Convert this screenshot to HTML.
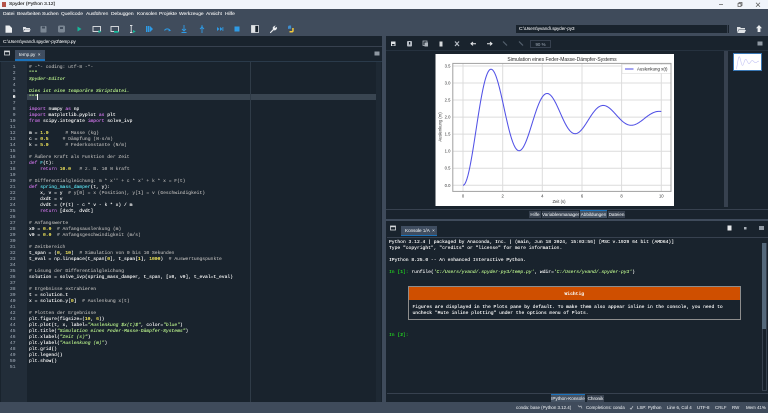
<!DOCTYPE html>
<html lang="de"><head><meta charset="utf-8"><title>Spyder (Python 3.12)</title>
<style>
html,body{margin:0;padding:0;width:768px;height:413px;overflow:hidden;background:#3f4b5b}
body{position:relative;font-family:"Liberation Sans",sans-serif;color:#e0e1e3;filter:blur(.3px);text-shadow:0 0 .2px currentColor}
.a{position:absolute}
.t{position:absolute;white-space:nowrap;font-size:4.9px;line-height:6px}
pre{margin:0;position:absolute;font-family:"Liberation Mono",monospace;font-size:4.67px;line-height:6px;color:#f0f0f0;white-space:pre}
.c{color:#a8a8a8}.k{color:#c670e0}.s{color:#b0e686;font-style:italic}.s2{color:#b0e686}.n{color:#faed5c}.d{color:#57d6e4}.b{color:#fab16c}
.tab{position:absolute;background:#455364;font-size:4.6px;line-height:8px;text-align:center;color:#d0d4d8;white-space:nowrap}
svg{position:absolute;left:0;top:0}
</style></head><body>
<!-- title bar -->
<div class="a" style="left:0;top:0;width:768px;height:9px;background:#f0f4fb"></div>
<div class="a" style="left:2px;top:2px;width:4px;height:5px;background:#b5534a"></div>
<div class="t" style="left:9px;top:2px;color:#333;font-size:4.9px">Spyder (Python 3.12)</div>
<!-- menu -->
<div class="a" style="left:0;top:9px;width:768px;height:11px;background:#3f4b5b"></div>
<div class="a" style="left:0;top:20px;width:768px;height:16px;background:#404c5c"></div>
<div class="t" style="left:3px;top:12px">Datei</div>
<div class="t" style="left:17px;top:12px">Bearbeiten</div>
<div class="t" style="left:42px;top:12px">Suchen</div>
<div class="t" style="left:61px;top:12px">Quellcode</div>
<div class="t" style="left:86px;top:12px">Ausführen</div>
<div class="t" style="left:111px;top:12px">Debuggen</div>
<div class="t" style="left:137px;top:12px">Konsolen</div>
<div class="t" style="left:159px;top:12px">Projekte</div>
<div class="t" style="left:179px;top:12px">Werkzeuge</div>
<div class="t" style="left:206px;top:12px">Ansicht</div>
<div class="t" style="left:225px;top:12px">Hilfe</div>

<!-- left pane -->
<div class="a" style="left:0;top:36px;width:382px;height:366px;background:#19232d"></div>
<div class="a" style="left:0;top:46px;width:382px;height:1px;background:#37414f"></div>
<div class="t" style="left:3px;top:39px;font-size:4.5px;color:#d8dadd">C:\Users\yvand\.spyder-py3\temp.py</div>
<div class="tab" style="left:15px;top:50px;width:30px;height:9px;line-height:9px;text-align:left;text-indent:4px;background:#3f4d60">temp.py &nbsp;×</div>
<div class="a" style="left:15px;top:59px;width:30px;height:2px;background:#1a72bb"></div>
<div class="a" style="left:0;top:61px;width:382px;height:1px;background:#2a3a4a"></div>
<div class="a" style="left:1px;top:62px;width:26px;height:340px;background:#222d39"></div>
<div class="a" style="left:27px;top:94px;width:349px;height:6px;background:#394551"></div>
<div class="a" style="left:250px;top:62px;width:1px;height:340px;background:#2f3b47"></div>
<div class="a" style="left:376px;top:62px;width:5px;height:340px;background:#1e2934"></div>
<div class="a" style="left:37px;top:94px;width:.7px;height:6px;background:#fff"></div>
<pre style="left:0;top:65px;width:15.5px;text-align:right;color:#8a94a0">1
2
3
4
5
<span style="color:#fff;font-weight:bold">6</span>
7
8
9
10
11
12
13
14
15
16
17
18
19
20
21
22
23
24
25
26
27
28
29
30
31
32
33
34
35
36
37
38
39
40
41
42
43
44
45
46
47
48
49
50
51</pre>
<pre style="left:29px;top:65px"><span class="c"># -*- coding: utf-8 -*-</span>
<span class="s2">"""</span>
<span class="s">Spyder-Editor</span>

<span class="s">Dies ist eine temporäre Skriptdatei.</span>
<span class="s2">"""</span>

<span class="k">import</span> numpy <span class="k">as</span> np
<span class="k">import</span> matplotlib.pyplot <span class="k">as</span> plt
<span class="k">from</span> scipy.integrate <span class="k">import</span> solve_ivp

m = <span class="n">1.0</span>      <span class="c"># Masse (kg)</span>
c = <span class="n">0.5</span>     <span class="c"># Dämpfung (N·s/m)</span>
k = <span class="n">5.0</span>      <span class="c"># Federkonstante (N/m)</span>

<span class="c"># Äußere Kraft als Funktion der Zeit</span>
<span class="k">def</span> <span class="d">F</span>(t):
    <span class="k">return</span> <span class="n">10.0</span>   <span class="c"># z. B. 10 N kraft</span>

<span class="c"># Differentialgleichung: m * x'' + c * x' + k * x = F(t)</span>
<span class="k">def</span> <span class="d">spring_mass_damper</span>(t, y):
    x, v = y  <span class="c"># y[0] = x (Position), y[1] = v (Geschwindigkeit)</span>
    dxdt = v
    dvdt = (F(t) - c * v - k * x) / m
    <span class="k">return</span> [dxdt, dvdt]

<span class="c"># Anfangswerte</span>
x0 = <span class="n">0.0</span>  <span class="c"># Anfangsauslenkung (m)</span>
v0 = <span class="n">0.0</span>  <span class="c"># Anfangsgeschwindigkeit (m/s)</span>

<span class="c"># Zeitbereich</span>
t_span = (<span class="n">0</span>, <span class="n">10</span>)  <span class="c"># Simulation von 0 bis 10 Sekunden</span>
t_eval = np.linspace(t_span[<span class="n">0</span>], t_span[<span class="n">1</span>], <span class="n">1000</span>)  <span class="c"># Auswertungspunkte</span>

<span class="c"># Lösung der Differentialgleichung</span>
solution = solve_ivp(spring_mass_damper, t_span, [x0, v0], t_eval=t_eval)

<span class="c"># Ergebnisse extrahieren</span>
t = solution.t
x = solution.y[<span class="n">0</span>]  <span class="c"># Auslenkung x(t)</span>

<span class="c"># Plotten der Ergebnisse</span>
plt.figure(figsize=(<span class="n">10</span>, <span class="n">6</span>))
plt.plot(t, x, label=<span class="s">"Auslenkung $x(t)$"</span>, color=<span class="s">"blue"</span>)
plt.title(<span class="s">"Simulation eines Feder-Masse-Dämpfer-Systems"</span>)
plt.xlabel(<span class="s">"Zeit (s)"</span>)
plt.ylabel(<span class="s">"Auslenkung (m)"</span>)
plt.grid()
plt.legend()
plt.show()
</pre>

<!-- top right path -->
<div class="a" style="left:516px;top:25px;width:213px;height:8px;background:#19232d"></div>
<div class="t" style="left:519px;top:26px;font-size:4.5px;color:#d8dadd">C:\Users\yvand\.spyder-py3</div>

<!-- plots pane -->
<div class="a" style="left:386px;top:36px;width:382px;height:183px;background:#19232d"></div>
<div class="a" style="left:386px;top:50px;width:382px;height:1px;background:#26323f"></div>
<div class="a" style="left:530px;top:40px;width:21px;height:8px;border:.6px solid #37414f;box-sizing:border-box;font-size:4.4px;line-height:7px;text-align:center;color:#7f8a96">90 %</div>
<div class="a" style="left:724px;top:51px;width:4px;height:156px;background:#37414f"></div>
<div class="a" style="left:733px;top:53px;width:29px;height:18px;background:#fff;border:.8px solid #3a78b5;box-sizing:border-box"></div>
<div class="a" style="left:386px;top:209px;width:382px;height:.6px;background:#37414f"></div>
<div class="tab" style="left:529px;top:211px;width:12px;height:7px;line-height:7px;background:#37414f">Hilfe</div>
<div class="tab" style="left:542px;top:211px;width:37px;height:7px;line-height:7px;background:#37414f">Variablenmanager</div>
<div class="tab" style="left:580px;top:211px;width:27px;height:7px;line-height:7px;background:#455364">Abbildungen</div>
<div class="a" style="left:580px;top:210px;width:27px;height:1px;background:#1a72bb"></div>
<div class="tab" style="left:608px;top:211px;width:17px;height:7px;line-height:7px;background:#37414f">Dateien</div>

<!-- console pane -->
<div class="a" style="left:386px;top:221px;width:382px;height:181px;background:#19232d"></div>
<div class="tab" style="left:401px;top:226px;width:36px;height:9px;line-height:9px;background:#3f4d60;text-align:left;text-indent:4px">Konsole 1/A &nbsp;×</div>
<div class="a" style="left:401px;top:235px;width:36px;height:1.4px;background:#1a72bb"></div>
<div class="a" style="left:387px;top:236.5px;width:381px;height:.7px;background:#37414f"></div>
<div class="a" style="left:387px;top:393px;width:381px;height:.7px;background:#37414f"></div>
<div class="a" style="left:762px;top:243px;width:3px;height:146px;background:#17202a;border:.5px solid #37414f"></div>
<div class="a" style="left:762px;top:243px;width:4px;height:86px;background:#54687a"></div>
<pre style="left:389px;top:240.3px;color:#f0f0f0">Python 3.12.4 | packaged by Anaconda, Inc. | (main, Jun 18 2024, 15:03:56) [MSC v.1929 64 bit (AMD64)]
Type "copyright", "credits" or "license" for more information.

IPython 8.25.0 -- An enhanced Interactive Python.

<span style="color:#22c422">In [<b>1</b>]:</span> runfile(<span class="s">'C:/Users/yvand/.spyder-py3/temp.py'</span>, wdir=<span class="s">'C:/Users/yvand/.spyder-py3'</span>)</pre>
<div class="a" style="left:408px;top:286px;width:333px;height:34px;border:.8px solid #8d8d8d;box-sizing:border-box;background:#19232d"></div>
<div class="a" style="left:409px;top:287px;width:331px;height:12.5px;background:#cf4f00"></div>
<pre style="left:564.5px;top:291.7px;font-weight:bold;color:#f4e6da">Wichtig</pre>
<pre style="left:412.5px;top:305px;line-height:6.2px;color:#f4f4f4">Figures are displayed in the Plots pane by default. To make them also appear inline in the console, you need to
uncheck "Mute inline plotting" under the options menu of Plots.</pre>
<pre style="left:389px;top:333.3px;color:#22c422">In [<b>2</b>]:</pre>
<div class="tab" style="left:551px;top:395px;width:34px;height:7px;line-height:7px;background:#455364">IPython-Konsole</div>
<div class="a" style="left:551px;top:394px;width:34px;height:1px;background:#1a72bb"></div>
<div class="tab" style="left:587px;top:395px;width:17px;height:7px;line-height:7px;background:#37414f">Chronik</div>

<!-- status -->
<div class="t" style="left:516px;top:404.5px;font-size:4.4px;color:#c9ced4">conda: base (Python 3.12.4)</div>
<div class="t" style="left:586px;top:404.5px;font-size:4.4px;color:#c9ced4">Completions: conda</div>
<div class="t" style="left:637px;top:404.5px;font-size:4.4px;color:#c9ced4">LSP: Python</div>
<div class="t" style="left:667px;top:404.5px;font-size:4.4px;color:#c9ced4">Line 6, Col 4</div>
<div class="t" style="left:697px;top:404.5px;font-size:4.4px;color:#c9ced4">UTF-8</div>
<div class="t" style="left:715px;top:404.5px;font-size:4.4px;color:#c9ced4">CRLF</div>
<div class="t" style="left:732px;top:404.5px;font-size:4.4px;color:#c9ced4">RW</div>
<div class="t" style="left:746px;top:404.5px;font-size:4.4px;color:#c9ced4">Mem 41%</div>

<!-- icons -->
<svg width="768" height="413" viewBox="0 0 768 413">
<!-- window buttons -->
<g stroke="#555" stroke-width=".7" fill="none">
<path d="M719 4.5h4"/><rect x="738" y="3.5" width="3" height="3"/><path d="M739 3.5v-1h3v3h-1"/><path d="M756 2.8l4 4m0-4l-4 4"/>
</g>
<!-- main toolbar -->
<path d="M5.5 25.5h4l2.5 2.5v4.8h-6.500z" fill="#eef0f2"/>
<path d="M23 32v-5h2.500l1 1h3.500v1h-6l-1 3zM23.500 32l1.200-2.800h6l-1.200 2.800z" fill="#dfe2e6"/>
<rect x="40.500" y="26" width="6" height="6.500" rx=".8" fill="#7b8794"/><rect x="42" y="26.500" width="3" height="2" fill="#404c5c"/>
<rect x="58" y="25.500" width="7" height="7" rx="1.500" fill="#7b8794"/><rect x="60" y="27" width="3" height="2" fill="#404c5c"/>
<path d="M77.500 26.500l4 2.500-4 2.500z" fill="#16b89a"/>
<g fill="none" stroke="#e0e3e6" stroke-width=".9"><rect x="93" y="26.500" width="7.500" height="5"/><rect x="111" y="26.500" width="7.500" height="5"/><path d="M130 25.500h2.400M130 32.500h2.400M131.200 25.500v7"/></g>
<path d="M98.500 30l2.800 1.600-2.800 1.600zM114 31h4.500v1.800h-4.500zM133 30l2.800 1.500-2.800 1.500z" fill="#16b89a"/>
<path d="M146 26h1.500v6H146zM148 26h1.500v6H148zM150 26l3 3-3 3z" fill="#2e9be6"/>
<path d="M164.500 30.500a3.200 3.200 0 0 1 5.500 0" fill="none" stroke="#2e9be6" stroke-width="1"/><path d="M169 29l2 1.800-2.600.6z" fill="#2e9be6"/>
<path d="M184 25v6M182 29l2 2 2-2M181.500 32.500h5" fill="none" stroke="#2e9be6" stroke-width=".9"/>
<path d="M202 33v-6M200 29l2-2 2 2" fill="none" stroke="#2e9be6" stroke-width=".9"/><path d="M201.200 25.500h1.600v1h-1.600z" fill="#2e9be6"/>
<path d="M217 27l2.500 2-2.500 2zM220 27l2.500 2-2.500 2z" fill="#2e9be6"/><rect x="222.500" y="27" width=".8" height="4" fill="#2e9be6"/>
<rect x="234.500" y="26.500" width="5" height="5" fill="#2e9be6"/>
<rect x="251.500" y="25.500" width="7" height="7" fill="#19232d" stroke="#e0e3e6" stroke-width=".8"/><rect x="251.500" y="25.500" width="3.800" height="7" fill="#e0e3e6"/>
<path d="M270 32.500l3.200-3.400a2 2 0 0 1 .4-2.500l1.700-.9-1 1.500.8.900 1.500-1a2.200 2.200 0 0 1-2.900 2.900l-3.100 3z" fill="#eceef0" stroke="#eceef0" stroke-width=".4"/>
<path d="M288 29v-1.800a1.700 1.700 0 0 1 1.800-1.700h1.300v3.300h-2.200z" fill="#3f8fd0"/><path d="M289.500 32.500v-1.500h2.700v-3h1.500v2.800a1.700 1.700 0 0 1-1.700 1.700z" fill="#f2c93c"/>
<!-- path row right -->
<rect x="727" y="25" width="1" height="8" fill="#37414f"/>
<path d="M737 33v-6h3l1 1h4v1.500h-6.500l-1.500 3.500zM737.500 33l1.300-3h7.200l-1.500 3z" fill="#e0e3e6"/>
<path d="M759 25l3 3.200h-1.600V32h-2.800v-3.800H756z" fill="#eceef0"/>
<!-- editor option -->
<rect x="4.500" y="51" width="5" height="4" fill="none" stroke="#d6d9dc" stroke-width=".8"/><rect x="4.500" y="51" width="5" height="1.200" fill="#d6d9dc"/>
<rect x="374.500" y="51.500" width="5" height="4" fill="#8f98a2"/>
<!-- plots toolbar -->
<rect x="391" y="41.500" width="4.500" height="4.500" fill="#e0e3e6"/><rect x="392" y="44" width="2.500" height="1.500" fill="#19232d"/>
<rect x="407" y="41" width="5" height="5.500" rx="1" fill="#b6bcc4"/><rect x="409" y="42" width="1.200" height="2.500" fill="#19232d"/>
<rect x="423" y="41" width="4" height="4.500" fill="none" stroke="#aeb5bd" stroke-width=".8"/><rect x="424.500" y="42.500" width="3.500" height="4" fill="#aeb5bd"/>
<rect x="439.500" y="41.500" width="3" height="5" fill="#d6d9dc"/>
<path d="M455 41.500l4 4.500m0-4.500l-4 4.500" stroke="#b6bcc4" stroke-width="1.200"/>
<path d="M471 43.700h5M473 42l-2 1.700 2 1.700" stroke="#e8eaec" stroke-width="1" fill="none"/>
<path d="M487 43.700h5M490 42l2 1.700-2 1.700" stroke="#e8eaec" stroke-width="1" fill="none"/>
<path d="M503 41.500l4 4M519 41.500l4 4" stroke="#55616e" stroke-width="1.200"/>
<rect x="757.500" y="41.500" width="5" height="4" fill="#8f98a2"/>
<!-- console icons -->
<rect x="390.500" y="226" width="5" height="4" fill="none" stroke="#d6d9dc" stroke-width=".8"/><rect x="390.500" y="226" width="5" height="1.200" fill="#d6d9dc"/>
<rect x="727.500" y="225.500" width="4" height="5" fill="#e6e8ea"/>
<rect x="744" y="227" width="2.500" height="2.500" fill="#aab1b9"/>
<rect x="759" y="226" width="5" height="4" fill="#8f98a2"/>
<!-- status icons -->
<path d="M578 405.500l1.500 1.500 1.500-1 1 2.500" stroke="#c9ced4" stroke-width=".6" fill="none"/>
<path d="M630 408l1 1.200 2-3" stroke="#c9ced4" stroke-width=".7" fill="none"/>
<!-- plot -->
<rect x="435.500" y="54" width="238.500" height="152" fill="#fff"/>
<g stroke="#dcdcdc" stroke-width="1">
<path d="M463 63.500V191M502.700 63.500V191M542.300 63.500V191M582 63.500V191M621.600 63.500V191M661.300 63.500V191"/>
<path d="M453 185.300H671M453 168.200H671M453 151.200H671M453 134.100H671M453 117.100H671M453 100H671M453 83H671M453 66H671"/>
</g>
<rect x="452.800" y="63.400" width="218.200" height="128" fill="none" stroke="#a0a0a0" stroke-width="1"/>
<polyline id="curve" fill="none" stroke="#5252e6" stroke-width="1.050"/>
<rect x="622" y="64.500" width="48.500" height="9" rx=".8" fill="#fff" stroke="#d6d6d6" stroke-width=".6"/>
<path d="M625 69h8.500" stroke="#5252e6" stroke-width="1.050"/>
<text x="637" y="70.600" font-size="4.400" fill="#333" font-family="Liberation Sans">Auslenkung x(t)</text>
<text x="562" y="61" font-size="5" fill="#333" text-anchor="middle" font-family="Liberation Sans">Simulation eines Feder-Masse-Dämpfer-Systems</text>
<g font-size="4.200" fill="#444" font-family="Liberation Sans">
<g text-anchor="end"><text x="450.500" y="186.800">0.0</text><text x="450.500" y="169.700">0.5</text><text x="450.500" y="152.700">1.0</text><text x="450.500" y="135.600">1.5</text><text x="450.500" y="118.600">2.0</text><text x="450.500" y="101.500">2.5</text><text x="450.500" y="84.500">3.0</text><text x="450.500" y="67.500">3.5</text></g>
<g text-anchor="middle"><text x="463" y="197.500">0</text><text x="502.700" y="197.500">2</text><text x="542.300" y="197.500">4</text><text x="582" y="197.500">6</text><text x="621.600" y="197.500">8</text><text x="661.300" y="197.500">10</text>
<text x="559" y="203">Zeit (s)</text>
<text transform="translate(441.500 127) rotate(-90)">Auslenkung (m)</text></g>
</g>
<polyline id="thumb" fill="none" stroke="#c4c4f4" stroke-width=".6"/>
</svg>
<script>
var a=[],b=[],w=Math.sqrt(4.9375);
for(var i=0;i<=400;i++){var t=i/40,x=2-2*Math.exp(-.25*t)*(Math.cos(w*t)+.25/w*Math.sin(w*t));
a.push((463+19.83*t).toFixed(2)+","+(185.3-34.1*x).toFixed(2));
b.push((736+2.3*t).toFixed(2)+","+(69-3.6*x).toFixed(2));}
document.getElementById("curve").setAttribute("points",a.join(" "));
document.getElementById("thumb").setAttribute("points",b.join(" "));
</script>
</body></html>
